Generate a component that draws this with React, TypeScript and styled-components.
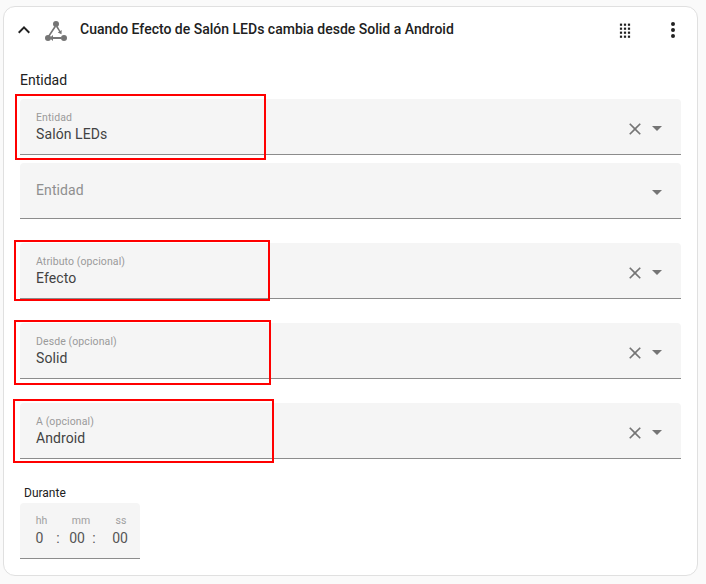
import React from "react"
import styled, { createGlobalStyle } from "styled-components"

const GlobalStyle = createGlobalStyle`
  html, body {
    margin: 0;
    padding: 0;
    background: #fafafa;
    font-family: Roboto, "Liberation Sans", sans-serif;
  }
`

const Page = styled.div`
  position: relative;
  width: 706px;
  height: 584px;
  padding: 6px 8px 0 3px;
  box-sizing: border-box;
  overflow: hidden;
`

const Card = styled.div`
  height: 570px;
  box-sizing: border-box;
  background: #fff;
  border: 1px solid #e0e0e0;
  border-radius: 12px;
`

const Header = styled.div`
  display: flex;
  align-items: center;
  height: 46px;
  padding: 0 12px 0 8px;
`

const Chevron = styled.svg`
  width: 24px;
  height: 24px;
  flex: none;
  fill: #212121;
`

const TriggerIcon = styled.svg`
  width: 24px;
  height: 24px;
  flex: none;
  margin-left: 8px;
  margin-top: 1px;
  fill: #757575;
`

const Title = styled.div`
  flex: 1;
  margin: -2px 0 0 12px;
  font-size: 14px;
  font-weight: 500;
  color: #212121;
`

const HeaderAction = styled.svg<{ $gap?: number }>`
  width: 24px;
  height: 24px;
  flex: none;
  margin-left: ${(p) => p.$gap ?? 0}px;
  fill: #212121;
`

const Body = styled.div`
  padding: 17px 16px 0 16px;
`

const SectionLabel = styled.div`
  font-size: 14px;
  line-height: 20px;
  color: #212121;
  margin-bottom: 9px;
`

const FieldList = styled.div`
  display: flex;
  flex-direction: column;
`

const Field = styled.div<{ $gap: number }>`
  display: flex;
  align-items: center;
  height: 56px;
  box-sizing: border-box;
  margin-top: ${(p) => p.$gap}px;
  padding: 0 16px;
  background: #f5f5f5;
  border-bottom: 1px solid #8c8c8c;
  border-radius: 4px 4px 0 0;
`

const FieldText = styled.div`
  flex: 1;
  display: flex;
  flex-direction: column;
  padding-top: 2px;
`

const FieldLabel = styled.div`
  font-size: 10.5px;
  line-height: 12px;
  letter-spacing: 0.1px;
  color: #9a9a9a;
`

const FieldValue = styled.div`
  font-size: 14px;
  line-height: 20px;
  letter-spacing: 0.1px;
  color: #424242;
`

const Placeholder = styled.div`
  font-size: 14px;
  margin-top: -2px;
  letter-spacing: 0.1px;
  color: #8f8f8f;
`

const ClearIcon = styled.svg`
  width: 20px;
  height: 20px;
  flex: none;
  margin-top: 4px;
  fill: #757575;
`

const ArrowIcon = styled.svg`
  width: 24px;
  height: 24px;
  flex: none;
  margin: 2px -4px 0 0;
  fill: #757575;
`

const Spacer = styled.div`
  flex: 1;
`

const DurationLabel = styled.div`
  font-size: 12px;
  line-height: 16px;
  margin: 26px 0 2px 4px;
  color: #212121;
`

const Duration = styled.div`
  width: 120px;
  height: 56px;
  box-sizing: border-box;
  padding-top: 12px;
  background: #f5f5f5;
  border-bottom: 1px solid #8c8c8c;
  border-radius: 4px 4px 0 0;
`

const UnitRow = styled.div`
  display: grid;
  grid-template-columns: 21px 58px 22px;
  padding: 0 0 1px 11px;
`

const DigitRow = styled.div`
  display: grid;
  grid-template-columns: 19px 18px 20px 14px 38px;
  padding-left: 10px;
`

const Unit = styled.div`
  font-size: 10.5px;
  line-height: 12px;
  color: #a0a0a0;
  text-align: center;
`

const Digit = styled.div`
  font-size: 14px;
  line-height: 20px;
  color: #555;
  text-align: center;
`

const Highlight = styled.div<{ $x: number; $y: number; $w: number; $h: number }>`
  position: absolute;
  left: ${(p) => p.$x}px;
  top: ${(p) => p.$y}px;
  width: ${(p) => p.$w}px;
  height: ${(p) => p.$h}px;
  box-sizing: border-box;
  border: 2px solid #ff0000;
`

const fields = [
  { label: "Entidad", value: "Salón LEDs", gap: 0 },
  { label: "", value: "", placeholder: "Entidad", gap: 8 },
  { label: "Atributo (opcional)", value: "Efecto", gap: 24 },
  { label: "Desde (opcional)", value: "Solid", gap: 24 },
  { label: "A (opcional)", value: "Android", gap: 24 }
]

const highlights = [
  { x: 15, y: 94, w: 251, h: 66 },
  { x: 14, y: 240, w: 256, h: 61 },
  { x: 14, y: 320, w: 257, h: 65 },
  { x: 13, y: 399, w: 261, h: 64 }
]

const dragDots = [0, 1, 2].flatMap((c) =>
  [0, 1, 2, 3].map((r) => ({ x: 6.9 + c * 4, y: 5.6 + r * 4 }))
)

const App = () => (
  <Page>
    <GlobalStyle />
    <Card>
      <Header>
        <Chevron viewBox="0 0 24 24">
          <path d="M7.41 15.41 12 10.83l4.59 4.58L18 14l-6-6-6 6z" />
        </Chevron>
        <TriggerIcon viewBox="0 0 24 24">
          <circle cx="12" cy="5" r="3" />
          <circle cx="4" cy="19" r="3" />
          <circle cx="20" cy="19" r="3" />
          <path d="M10.5 7 3.6 17.4l1.4.9L11.9 8zM13.5 7l-1.4.9 3 4.7-1.3.8 3.7 1.8.2-4.1-1.3.8zM9 18.1v-2l-3.4 2.9L9 21.9V20h8v-1.9z" />
        </TriggerIcon>
        <Title>Cuando Efecto de Salón LEDs cambia desde Solid a Android</Title>
        <HeaderAction viewBox="0 0 24 24">
          {dragDots.map((d) => (
            <rect key={`${d.x}-${d.y}`} x={d.x} y={d.y} width="2.2" height="2.2" />
          ))}
        </HeaderAction>
        <HeaderAction viewBox="0 0 24 24" $gap={24}>
          <path d="M12 16a2 2 0 1 1 0 4 2 2 0 0 1 0-4m0-6a2 2 0 1 1 0 4 2 2 0 0 1 0-4m0-6a2 2 0 1 1 0 4 2 2 0 0 1 0-4z" />
        </HeaderAction>
      </Header>
      <Body>
        <SectionLabel>Entidad</SectionLabel>
        <FieldList>
          {fields.map((f, i) => (
            <Field key={i} $gap={f.gap}>
              {f.placeholder ? (
                <>
                  <Placeholder>{f.placeholder}</Placeholder>
                  <Spacer />
                </>
              ) : (
                <>
                  <FieldText>
                    <FieldLabel>{f.label}</FieldLabel>
                    <FieldValue>{f.value}</FieldValue>
                  </FieldText>
                  <ClearIcon viewBox="0 0 24 24">
                    <path d="M19 6.41 17.59 5 12 10.59 6.41 5 5 6.41 10.59 12 5 17.59 6.41 19 12 13.41 17.59 19 19 17.59 13.41 12z" />
                  </ClearIcon>
                </>
              )}
              <ArrowIcon viewBox="0 0 24 24">
                <path d="M7 10l5 5 5-5z" />
              </ArrowIcon>
            </Field>
          ))}
        </FieldList>
        <DurationLabel>Durante</DurationLabel>
        <Duration>
          <UnitRow>
            <Unit>hh</Unit>
            <Unit>mm</Unit>
            <Unit>ss</Unit>
          </UnitRow>
          <DigitRow>
            <Digit>0</Digit>
            <Digit>:</Digit>
            <Digit>00</Digit>
            <Digit>:</Digit>
            <Digit>00</Digit>
          </DigitRow>
        </Duration>
      </Body>
    </Card>
    {highlights.map((h) => (
      <Highlight key={h.y} $x={h.x} $y={h.y} $w={h.w} $h={h.h} />
    ))}
  </Page>
)

export default App
